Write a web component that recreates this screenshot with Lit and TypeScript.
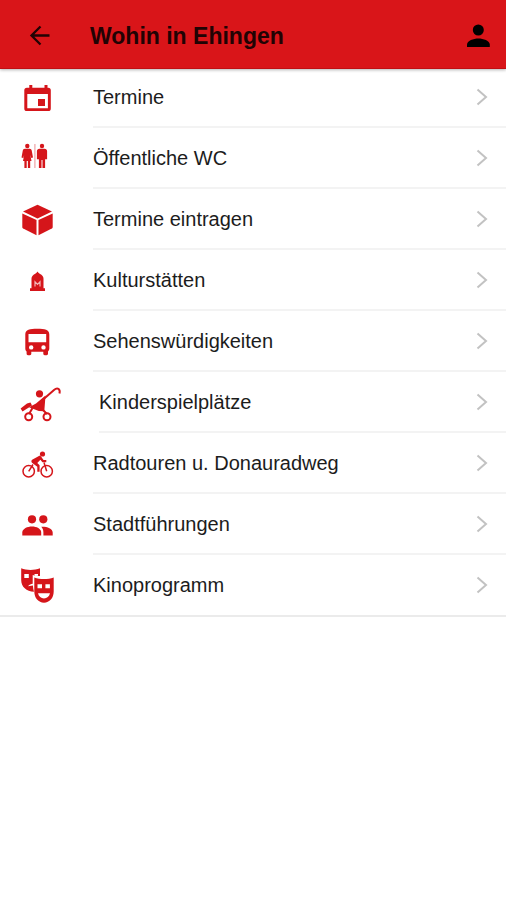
import { LitElement, html, css, svg } from "lit";
import type { SVGTemplateResult } from "lit";
import { customElement } from "lit/decorators.js";
import { classMap } from "lit/directives/class-map.js";

interface Entry {
  label: string;
  icon: SVGTemplateResult;
  wide?: boolean;
}

const calendar = svg`
  <path fill-rule="evenodd" d="M12.300 7h3v2.700h12.200V7h3v2.700h.7a2.600 2.600 0 0 1 2.600 2.600v18.200a2.600 2.600 0 0 1-2.600 2.600H9.900a2.600 2.600 0 0 1-2.600-2.600V12.300a2.600 2.600 0 0 1 2.600-2.600h2.400zM10.300 16v14.200h20.600V16z"/>
  <path d="M21 21h7v7h-7z"/>`;

const restroom = svg`
  <circle cx="10.300" cy="7" r="2.200"/>
  <path d="M7.900 9.700h4.800c1.200 0 1.700.7 2 1.800l1.300 7-1.700.5-1-3.300 1.200 6.300h-1.300v7h-2.300v-7h-1.200v7H7.400v-7H6l1.200-6.300-1 3.300-1.700-.5 1.300-7c.3-1.100.8-1.800 2.100-1.800z"/>
  <path d="M17.300 5h1.200v24h-1.200z" opacity=".4"/>
  <circle cx="25" cy="7" r="2.200"/>
  <path d="M22.500 9.700h5c1.600 0 2.600.9 2.600 2.500v8h-2V29h-2.600v-8h-1v8h-2.600v-8.800h-2v-8c0-1.600 1-2.500 2.600-2.500z"/>`;

const cube = svg`
  <path d="M20.500 4.800 35 11.600 20.500 18.400 6 11.600z"/>
  <path d="M5.300 13.400 19.500 20v15.200L6.200 28.600c-.6-.3-.9-.8-.9-1.400z"/>
  <path d="M35.700 13.400 21.500 20v15.200l13.300-6.600c.6-.3.900-.8.900-1.400z"/>`;

const monument = svg`
  <path d="M20.500 10.400c.8 1.600 2.200 2.200 3.600 3.100 1.600 1.100 2.400 2.500 2.400 4.300v9.400h1.500V30H13v-2.800h1.500v-9.400c0-1.800.8-3.200 2.400-4.300 1.400-.9 2.800-1.500 3.600-3.100z"/>
  <path class="cut" d="M18 25.500v-4.800l2.500 2.600 2.500-2.600v4.800"/>`;

const bus = svg`
  <path fill-rule="evenodd" d="M8.300 12.500c0-5 4.500-5.800 12-5.800s12 .8 12 5.800v14.100c0 1.200-.5 2.200-1.300 3v2.200c0 .8-.6 1.400-1.400 1.400h-1.900c-.8 0-1.400-.6-1.400-1.400v-2H14.300v2c0 .8-.6 1.400-1.400 1.400H11c-.8 0-1.400-.6-1.400-1.400v-2.200c-.8-.7-1.300-1.800-1.300-3zM11.500 12v8.200h17.700V12zM14.200 23.200a2.200 2.200 0 1 0 0 4.400 2.200 2.200 0 0 0 0-4.400zm12.300 0a2.200 2.200 0 1 0 0 4.400 2.200 2.200 0 0 0 0-4.400z"/>`;

const stroller = svg`
  <circle cx="22.500" cy="10.800" r="3.600"/>
  <path d="M28.500 12.500 27.300 28.300l-5.500-.3L12 24.300l7-3.800z"/>
  <path d="M13.500 19.500 15 22.500l-9.500 6-1.900-3L10 20.500z"/>
  <path class="line" d="M25 17.500 37 7c3.500-3.200 6.500-1 5.500 3.500"/>
  <path class="line" d="M15.500 25l-3.500 6M26 27l4 4"/>
  <circle class="line" cx="11.700" cy="33.700" r="3.500"/>
  <circle class="line" cx="30" cy="33.700" r="3.500"/>`;

const bicycle = svg`
  <circle class="thin" cx="11.700" cy="27.300" r="5.700"/>
  <circle class="thin" cx="29.700" cy="27.300" r="5.700"/>
  <circle cx="25.500" cy="10" r="2.600"/>
  <path d="M21.500 12.200c1-.6 2.100-.4 2.700.5l2.300 3.400h2.800v2.100h-3.900l-2-2.400-3.100 3.200 2.300 2.200v6.500h-2.300v-5l-5-3.700c-1.200-1-1.200-2.200-.2-3.200z"/>
  <path class="thin" d="M16 20.500l-4.300 6.800M27 18.500l2.700 8.800"/>`;

const people = svg`
  <circle cx="15" cy="14.300" r="4.100"/>
  <circle cx="26.300" cy="14.300" r="4.100"/>
  <path d="M5.300 30.400v-2.900c0-3.900 5.200-6 9.700-6s9.200 2.100 9.200 6v2.900z"/>
  <path d="M24.300 21.700c5.300-.3 11.400 1.700 11.400 5.800v2.900h-9.300v-2.900c0-2.500-.8-4.400-2.100-5.800z"/>`;

const masks = svg`
  <path fill-rule="evenodd" d="M4.200 3.300c5.300 2.200 13.200 2.200 18.800 0v7.700c-2.300.2-5-.1-7.300-.9v8.600c-1.700 0-3.500.9-4.700 2.500l4.900-.6c.1 2.300.5 4.300 1.100 6.200C9.500 26.500 4.200 21.600 4.200 14.900zM7.300 9v4h4.500V9zm10.200 0v1.800h3.500V9z"/>
  <path fill-rule="evenodd" d="M17.300 12.500c5.800 2.100 13.500 2.100 19.400 0v14c0 6.500-4.200 11.200-9.700 11.200s-9.700-4.700-9.700-11.200zM20.500 19.200v4h4.500v-4zm7.900 0v4h4.500v-4zM21 28.300c.7 3.300 3.100 5.200 6 5.200s5.300-1.900 6-5.200z"/>`;

const entries: Entry[] = [
  { label: "Termine", icon: calendar },
  { label: "Öffentliche WC", icon: restroom },
  { label: "Termine eintragen", icon: cube },
  { label: "Kulturstätten", icon: monument },
  { label: "Sehenswürdigkeiten", icon: bus },
  { label: "Kinderspielplätze", icon: stroller, wide: true },
  { label: "Radtouren u. Donauradweg", icon: bicycle },
  { label: "Stadtführungen", icon: people },
  { label: "Kinoprogramm", icon: masks },
];

@customElement("app-root")
export class AppRoot extends LitElement {
  static styles = css`
    :host {
      display: block;
      min-height: 100vh;
      background: #fff;
      color: #1c1c1c;
      font-family: "Liberation Sans", Arial, sans-serif;
    }
    .bar {
      position: relative;
      display: flex;
      align-items: center;
      box-sizing: border-box;
      height: 67px;
      padding: 4px 14px 0 26px;
      background: #d91519;
      box-shadow: 0 1px 0 #d91519, 0 2px 0 #c00f13, 0 3px 3px #0000004d;
    }
    .tool {
      display: flex;
      padding: 0;
      border: 0;
      background: none;
      color: #210304;
      cursor: pointer;
    }
    .profile {
      color: #000;
    }
    .title {
      flex: 1;
      margin: 0 0 0 36px;
      color: #210304;
      font-size: 23px;
      line-height: 28px;
      font-weight: 700;
    }
    .list {
      margin: 0;
      padding: 0;
      list-style: none;
      border-bottom: 2px solid #ebebeb;
    }
    .row {
      display: flex;
      align-items: stretch;
      height: 61px;
      padding-left: 17px;
      color: inherit;
      text-decoration: none;
    }
    .item:last-child .row {
      height: 60px;
    }
    .icon {
      flex: none;
      align-self: center;
      width: 40px;
      height: 40px;
      margin-right: 36px;
      fill: #d5151a;
    }
    .wide {
      width: 46px;
    }
    .line,
    .thin {
      fill: none;
      stroke: #d5151a;
      stroke-width: 2;
    }
    .thin {
      stroke-width: 1.5;
    }
    .cut {
      fill: none;
      stroke: #f3b5b6;
      stroke-width: 1.2;
    }
    .body {
      flex: 1;
      display: flex;
      align-items: center;
      justify-content: space-between;
      padding-right: 18px;
      border-bottom: 2px solid #f3f3f3;
      font-size: 20px;
      line-height: 24px;
    }
    .item:last-child .body {
      border-bottom: 0;
    }
    .chevron {
      fill: none;
      stroke: #c2c2c2;
      stroke-width: 2;
    }
  `;

  render() {
    return html`
      <header class="bar">
        <button class="tool" aria-label="Zurück">
          <svg width="28" height="28" viewBox="0 0 28 28" fill="none" stroke="currentColor" stroke-width="2.300">
            <path d="M23.500 13.500H6M14.500 4.500 5.500 13.500l9 9" />
          </svg>
        </button>
        <h1 class="title">Wohin in Ehingen</h1>
        <button class="tool profile" aria-label="Profil">
          <svg width="28" height="28" viewBox="0 0 28 28" fill="currentColor">
            <circle cx="14.300" cy="8" r="5.500" />
            <path d="M3 25v-2.400c0-3.900 6.500-6.100 11.400-6.100s11.400 2.200 11.400 6.100V25z" />
          </svg>
        </button>
      </header>
      <nav>
        <ul class="list">
          ${entries.map(
            (entry) => html`
              <li class="item">
                <a class="row" href="#">
                  <svg
                    class=${classMap({ icon: true, wide: !!entry.wide })}
                    viewBox=${entry.wide ? "0 0 46 40" : "0 0 40 40"}
                    aria-hidden="true"
                  >
                    ${entry.icon}
                  </svg>
                  <span class="body">
                    ${entry.label}
                    <svg class="chevron" width="12" height="18" viewBox="0 0 12 18" aria-hidden="true">
                      <path d="M1.500 1.500 10 9l-8.500 7.500" />
                    </svg>
                  </span>
                </a>
              </li>
            `,
          )}
        </ul>
      </nav>
    `;
  }
}
